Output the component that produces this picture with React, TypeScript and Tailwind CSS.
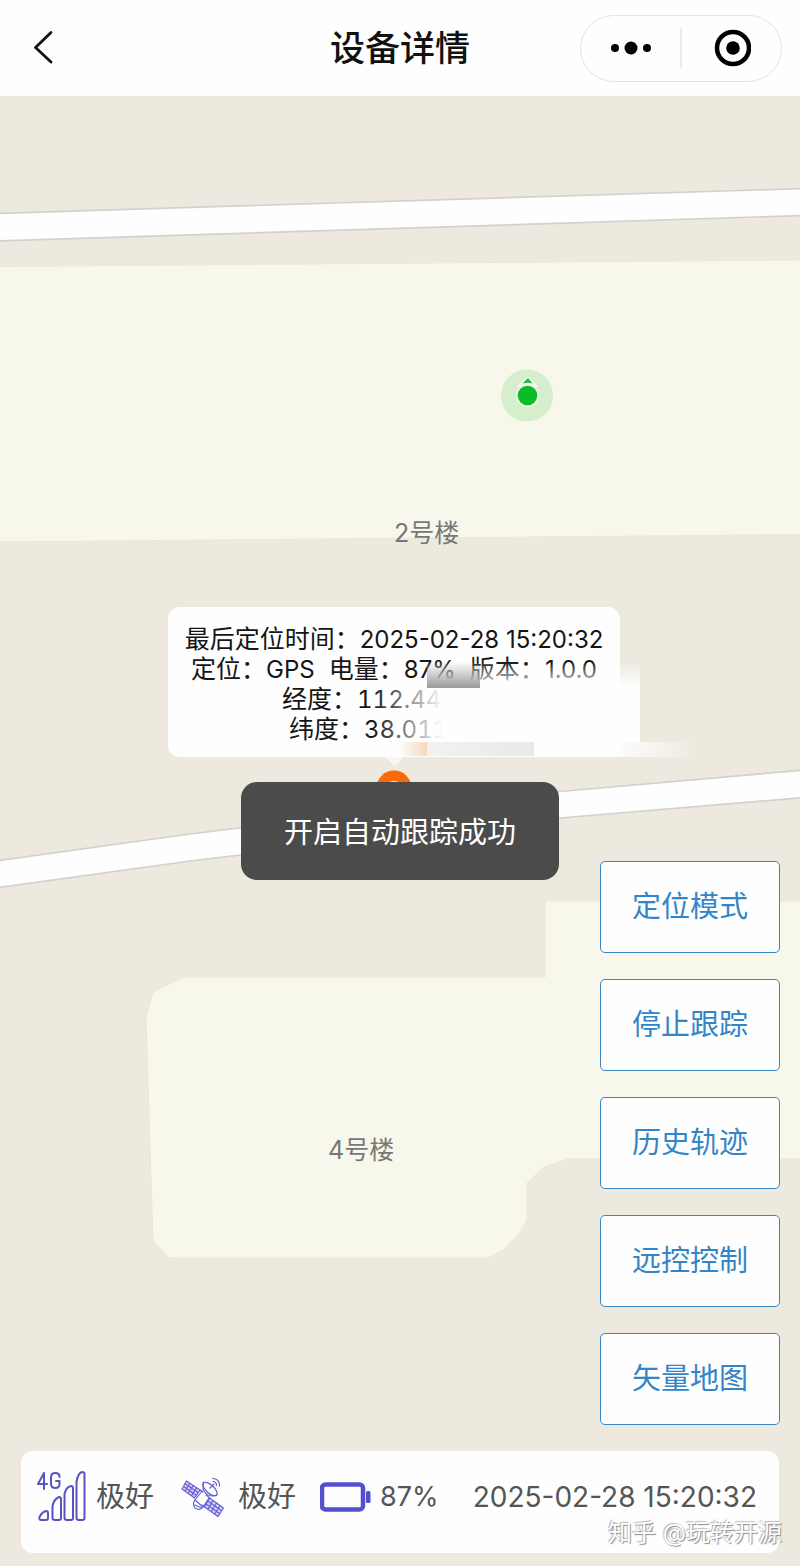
import type { ReactNode } from "react";

const modes = ["定位模式", "停止跟踪", "历史轨迹", "远控控制", "矢量地图"];

function Latin({ children }: { children: ReactNode }) {
  return <span className="text-[24px] leading-none">{children}</span>;
}

function Header() {
  return (
    <header className="grid h-24 shrink-0 grid-cols-[1fr_auto_1fr] items-center bg-[#fefefe] px-[18px]">
      <button type="button" aria-label="返回" className="ml-1.5 w-10">
        <svg viewBox="0 0 40 40" className="size-10" fill="none" stroke="#111" strokeWidth="2.800" strokeLinecap="round" strokeLinejoin="round">
          <path d="M27 4.500 11.500 19.500 27 34" />
        </svg>
      </button>
      <h1 className="text-[35px] leading-[40px] font-medium text-[#111]">设备详情</h1>
      <div className="flex h-[67px] w-[202px] items-center justify-self-end rounded-full border border-[#e2e2e2]">
        <button type="button" aria-label="更多" className="flex h-full flex-1 items-center justify-center">
          <svg viewBox="0 0 42 16" className="h-4 w-[42px]">
            <circle cx="5" cy="8" r="4" />
            <circle cx="21" cy="8" r="6.500" />
            <circle cx="37" cy="8" r="4" />
          </svg>
        </button>
        <span className="h-10 w-[2px] bg-[#ececec]" />
        <button type="button" aria-label="关闭" className="flex h-full flex-1 items-center justify-center">
          <svg viewBox="0 0 38 38" className="size-[38px]">
            <circle cx="20" cy="19" r="16" fill="none" stroke="#000" strokeWidth="4.500" />
            <circle cx="20" cy="19" r="6.800" />
          </svg>
        </button>
      </div>
    </header>
  );
}

function MapCanvas() {
  return (
    <svg viewBox="0 96 800 1470" preserveAspectRatio="xMidYMin slice" className="absolute inset-0 h-full w-full" aria-hidden="true">
      <rect y="96" width="800" height="1470" fill="#ede9df" />
      <g stroke="#eae7dc" strokeWidth="1" fill="#f7f8eb">
        <path d="M-2 266.500 802 260V534.500L-2 542Z" />
        <path d="M545 901H802V1159H568L544 1167 527 1183V1220L519 1234 503 1250 488 1258H169L153 1241 146 1018 153 992 184 977H545Z" />
      </g>
      <g stroke="#d2d1ce" strokeWidth="1.700" fill="#fefefe">
        <path d="M-4 213.500 804 188.500V215.500L-4 241Z" />
        <path d="M-4 861 190 834 400 808 560 791.500 804 770V797.500L560 818 400 836 190 861 -4 888Z" />
      </g>
      <circle cx="527" cy="395.500" r="26" fill="#d5eecb" />
      <path d="M516 387 528 376 539 387Z" fill="#eef7e4" />
      <circle cx="527.500" cy="395.500" r="11.500" fill="#eef7e4" />
      <circle cx="527.500" cy="395.500" r="9.800" fill="#0cbb28" />
      <path d="M522.500 383.500 528 378 532.500 383.500Q527.500 382 522.500 383.500Z" fill="#22b83c" />
      <circle cx="394" cy="788" r="17.500" fill="#fb6a07" />
      <circle cx="394" cy="790" r="8.500" fill="none" stroke="#ffd9b8" strokeWidth="1.500" />
    </svg>
  );
}

function InfoWindow() {
  return (
    <>
      <div className="absolute top-[511px] left-[168px] h-[150px] w-[452px] rounded-xl bg-[#fefefe] pt-[17px] text-center text-[25px] leading-[30px] whitespace-pre text-[#151515]">
        <p>最后定位时间：<Latin>2025-02-28 15:20:32</Latin></p>
        <p>定位：<Latin>GPS</Latin>  电量：<Latin>87%</Latin>  版本：<Latin>1.0.0</Latin></p>
        <p className="pl-[114px] text-left tabular-nums">经度：<Latin>112.444</Latin></p>
        <p className="pl-[121px] text-left tabular-nums">纬度：<Latin>38.011</Latin></p>
      </div>
      <svg viewBox="0 0 560 160" className="absolute top-[566px] left-[168px] h-[160px] w-[560px]" aria-hidden="true">
        <defs>
          <linearGradient id="veil" x1="0" x2="1" y1="0" y2="0">
            <stop offset="0" stopColor="#fefefe" stopOpacity="0" />
            <stop offset="1" stopColor="#fefefe" />
          </linearGradient>
          <linearGradient id="drop" x1="0" x2="0" y1="0" y2="1">
            <stop offset="0" stopColor="#fefefe" stopOpacity="0" />
            <stop offset="1" stopColor="#fefefe" />
          </linearGradient>
          <linearGradient id="shade" x1="0" x2="0" y1="0" y2="1">
            <stop offset="0" stopColor="#999" stopOpacity="0" />
            <stop offset="1" stopColor="#999" />
          </linearGradient>
          <linearGradient id="fade" x1="0" x2="1" y1="0" y2="0">
            <stop offset="0" stopColor="#fefefe" />
            <stop offset="1" stopColor="#fefefe" stopOpacity="0" />
          </linearGradient>
          <linearGradient id="glow" x1="0" x2="1" y1="0" y2="0">
            <stop offset="0" stopColor="#f7d9bd" stopOpacity="0" />
            <stop offset="1" stopColor="#f7d9bd" />
          </linearGradient>
          <linearGradient id="strip" x1="0" x2="1" y1="0" y2="0">
            <stop offset="0" stopColor="#f2f2f2" />
            <stop offset="1" stopColor="#e9e9e9" />
          </linearGradient>
        </defs>
        <path d="M217 95H236L226.500 104Z" fill="#f8f7f3" />
        <rect x="259" y="0" width="213" height="26" fill="url(#drop)" />
        <rect x="205" y="26" width="70" height="53" fill="url(#veil)" />
        <rect x="275" y="26" width="197" height="54" fill="#fefefe" />
        <rect x="259" y="0" width="53" height="26" fill="url(#shade)" />
        <rect x="230" y="80" width="29" height="14" fill="url(#glow)" />
        <rect x="259" y="80" width="107" height="14" fill="url(#strip)" />
        <rect x="366" y="80" width="76" height="15" fill="#fefefe" />
        <rect x="442" y="80" width="90" height="15" fill="url(#fade)" />
      </svg>
    </>
  );
}

function SignalIcon() {
  return (
    <svg viewBox="0 0 64 64" className="size-16 shrink-0" fill="none" stroke="#5853c4" strokeWidth="2" strokeLinejoin="round" strokeLinecap="round" aria-hidden="true">
      <path d="M14 8 8 19H17M14 8V24" />
      <path d="M29.500 12Q29.500 8 25.500 8Q21 8 21 12V19Q21 23 25.500 23Q29.500 23 29.500 19V16H26" />
      <path d="M11 55Q9 55 9.500 52Q12 47 16 46Q18 46 18 48V53Q18 55 16 55Z" />
      <path d="M22.500 41Q24 34 29 32Q31 32 31 34V53Q31 55 29 55H25Q22.500 55 22.500 53Z" />
      <path d="M34.500 29Q36 22 41 21Q43 21 43 23V53Q43 55 41 55H37Q34.500 55 34.500 53Z" />
      <path d="M46.500 17Q48 8 52 7Q54.500 7 54.500 9V53Q54.500 55 52.500 55H49Q46.500 55 46.500 53Z" />
    </svg>
  );
}

function SatelliteIcon() {
  return (
    <svg viewBox="0 0 54 54" className="size-[54px] shrink-0" fill="none" stroke="#6460d4" strokeWidth="1.200" strokeLinejoin="round" strokeLinecap="round" aria-hidden="true">
      <path fill="#d4d2f6" d="M10.500 11 24 20 18.500 28 6 19ZM13.800 13.200 9 21.200M17.200 15.500 12.200 23.500M20.600 17.800 15.400 25.800M9 13.500 22.200 22.700M7.500 16.200 20.300 25.400" />
      <path fill="#d4d2f6" d="M33.500 28 47.500 38 42 46.500 28.500 37ZM37 30.500 32 39.400M40.500 33 35.400 41.800M44 35.500 38.700 44.200M31.800 31 45.700 40.800M30.200 34 43.800 43.700" />
      <path d="M24 20 27 22M28.500 37 26 35M30 25 34 28" />
      <ellipse cx="34" cy="19" rx="9" ry="4" transform="rotate(42 34 19)" />
      <path d="M27.500 12Q25 21 32 25Q37 27 40.500 25M26 21 19 30 27 37 33 28M19 30Q16 34 19 38Q24 41 27 37M19 35 26 38" />
      <path d="M34 18 38 14M37 11.500Q40.500 11.500 40.500 15.500M36.500 8.500Q43.500 8.500 43.500 16" />
    </svg>
  );
}

function StatusBar() {
  return (
    <footer className="relative mx-[21px] flex h-[102px] items-center rounded-xl bg-[#fefefe] pb-[10px] pl-[9px] text-[29px] leading-[40px] whitespace-nowrap text-[#555]">
      <SignalIcon />
      <span className="ml-0.5">极好</span>
      <div className="w-[22px]" />
      <SatelliteIcon />
      <span className="ml-2">极好</span>
      <svg viewBox="0 0 52 30" className="ml-6 h-[30px] w-[52px] shrink-0" fill="none" aria-hidden="true">
        <rect x="2" y="2.500" width="41" height="25" rx="3.500" stroke="#5350cf" strokeWidth="4.500" />
        <rect x="46" y="9" width="4.500" height="12" rx="1.500" fill="#5350cf" />
      </svg>
      <span className="ml-2 text-[27px]">87%</span>
      <time className="mr-[22px] ml-auto text-[28px]">2025-02-28 15:20:32</time>
      <span className="absolute right-[-3px] bottom-0 text-[24px] text-white [text-shadow:1px_1px_1px_#8a8a8a,-1px_-1px_1px_#bbb]">知乎 @玩转开源</span>
    </footer>
  );
}

export default function App() {
  return (
    <div lang="zh-CN" className="flex min-h-screen flex-col bg-[#ede9df] font-['Inter','Noto_Sans_CJK_SC',sans-serif]">
      <Header />
      <main className="relative flex flex-1 flex-col justify-end gap-[26px] pt-[765px] pb-[13px]">
        <MapCanvas />
        <span className="absolute top-[418px] left-[394px] text-[25px] leading-[38px] text-[#777]">2号楼</span>
        <span className="absolute top-[1035px] left-[328px] text-[25px] leading-[38px] text-[#777]">4号楼</span>
        <InfoWindow />
        <div role="status" className="absolute top-[686px] left-1/2 flex h-[98px] w-[318px] -translate-x-1/2 items-center justify-center rounded-2xl bg-[#4b4b4b] pt-1 text-[29px] text-white">
          开启自动跟踪成功
        </div>
        <nav className="relative mr-5 flex flex-col gap-[26px] self-end">
          {modes.map((label) => (
            <button key={label} type="button" className="h-[92px] w-[180px] rounded-[5px] border border-[#3587c4] bg-[#fefefe] text-[29px] text-[#3385c8]">
              {label}
            </button>
          ))}
        </nav>
        <StatusBar />
      </main>
    </div>
  );
}
